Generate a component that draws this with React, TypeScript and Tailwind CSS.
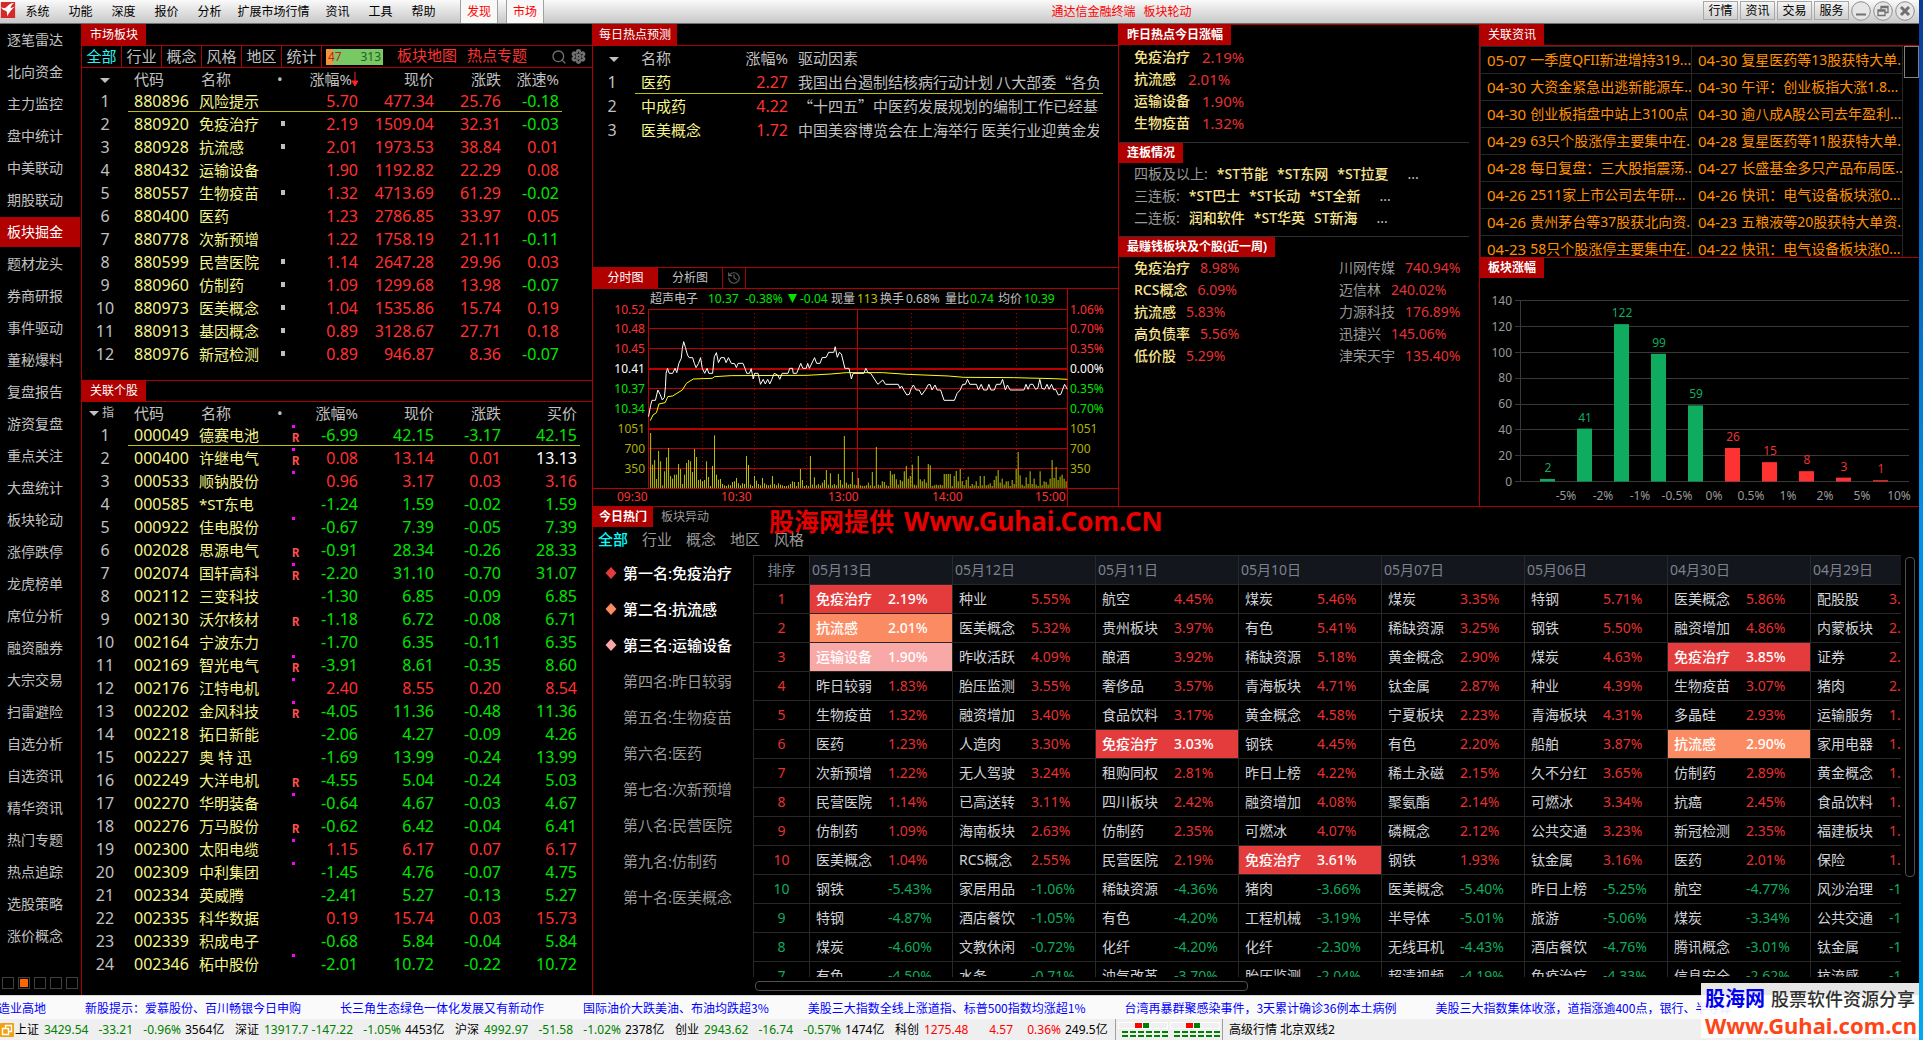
import { Search, Settings, History } from 'lucide-react';
import clsx from 'clsx';

const MENU = ['系统', '功能', '深度', '报价', '分析', '扩展市场行情', '资讯', '工具', '帮助'];

const SIDEBAR = [
  '逐笔雷达', '北向资金', '主力监控', '盘中统计', '中美联动', '期股联动', '板块掘金', '题材龙头', '券商研报', '事件驱动',
  '董秘爆料', '复盘报告', '游资复盘', '重点关注', '大盘统计', '板块轮动', '涨停跌停', '龙虎榜单', '席位分析', '融资融券',
  '大宗交易', '扫雷避险', '自选分析', '自选资讯', '精华资讯', '热门专题', '热点追踪', '选股策略', '涨价概念',
];

interface Sector { code: string; name: string; dot: boolean; values: string[] }

const SECTORS: Sector[] = [
  { code: '880896', name: '风险提示', dot: false, values: ['5.70', '477.34', '25.76', '-0.18'] },
  { code: '880920', name: '免疫治疗', dot: true, values: ['2.19', '1509.04', '32.31', '-0.03'] },
  { code: '880928', name: '抗流感', dot: true, values: ['2.01', '1973.53', '38.84', '0.01'] },
  { code: '880432', name: '运输设备', dot: false, values: ['1.90', '1192.82', '22.29', '0.08'] },
  { code: '880557', name: '生物疫苗', dot: true, values: ['1.32', '4713.69', '61.29', '-0.02'] },
  { code: '880400', name: '医药', dot: false, values: ['1.23', '2786.85', '33.97', '0.05'] },
  { code: '880778', name: '次新预增', dot: false, values: ['1.22', '1758.19', '21.11', '-0.11'] },
  { code: '880599', name: '民营医院', dot: true, values: ['1.14', '2647.28', '29.96', '0.03'] },
  { code: '880960', name: '仿制药', dot: true, values: ['1.09', '1299.68', '13.98', '-0.07'] },
  { code: '880973', name: '医美概念', dot: true, values: ['1.04', '1535.86', '15.74', '0.19'] },
  { code: '880913', name: '基因概念', dot: true, values: ['0.89', '3128.67', '27.71', '0.18'] },
  { code: '880976', name: '新冠检测', dot: true, values: ['0.89', '946.87', '8.36', '-0.07'] },
];

// flags: d = dot above, r = margin-trading mark
interface Stock { code: string; name: string; flags: string; chg: string; price: string; diff: string; bid: string; flat?: boolean }

const STOCKS: Stock[] = [
  { code: '000049', name: '德赛电池', flags: 'dr', chg: '-6.99', price: '42.15', diff: '-3.17', bid: '42.15' },
  { code: '000400', name: '许继电气', flags: 'dr', chg: '0.08', price: '13.14', diff: '0.01', bid: '13.13', flat: true },
  { code: '000533', name: '顺钠股份', flags: 'd', chg: '0.96', price: '3.17', diff: '0.03', bid: '3.16' },
  { code: '000585', name: '*ST东电', flags: '', chg: '-1.24', price: '1.59', diff: '-0.02', bid: '1.59' },
  { code: '000922', name: '佳电股份', flags: 'd', chg: '-0.67', price: '7.39', diff: '-0.05', bid: '7.39' },
  { code: '002028', name: '思源电气', flags: 'r', chg: '-0.91', price: '28.34', diff: '-0.26', bid: '28.33' },
  { code: '002074', name: '国轩高科', flags: 'dr', chg: '-2.20', price: '31.10', diff: '-0.70', bid: '31.07' },
  { code: '002112', name: '三变科技', flags: '', chg: '-1.30', price: '6.85', diff: '-0.09', bid: '6.85' },
  { code: '002130', name: '沃尔核材', flags: 'r', chg: '-1.18', price: '6.72', diff: '-0.08', bid: '6.71' },
  { code: '002164', name: '宁波东力', flags: '', chg: '-1.70', price: '6.35', diff: '-0.11', bid: '6.35' },
  { code: '002169', name: '智光电气', flags: 'dr', chg: '-3.91', price: '8.61', diff: '-0.35', bid: '8.60' },
  { code: '002176', name: '江特电机', flags: 'd', chg: '2.40', price: '8.55', diff: '0.20', bid: '8.54' },
  { code: '002202', name: '金风科技', flags: 'dr', chg: '-4.05', price: '11.36', diff: '-0.48', bid: '11.36' },
  { code: '002218', name: '拓日新能', flags: '', chg: '-2.06', price: '4.27', diff: '-0.09', bid: '4.26' },
  { code: '002227', name: '奥 特 迅', flags: '', chg: '-1.69', price: '13.99', diff: '-0.24', bid: '13.99' },
  { code: '002249', name: '大洋电机', flags: 'r', chg: '-4.55', price: '5.04', diff: '-0.24', bid: '5.03' },
  { code: '002270', name: '华明装备', flags: 'd', chg: '-0.64', price: '4.67', diff: '-0.03', bid: '4.67' },
  { code: '002276', name: '万马股份', flags: 'r', chg: '-0.62', price: '6.42', diff: '-0.04', bid: '6.41' },
  { code: '002300', name: '太阳电缆', flags: 'd', chg: '1.15', price: '6.17', diff: '0.07', bid: '6.17' },
  { code: '002309', name: '中利集团', flags: 'd', chg: '-1.45', price: '4.76', diff: '-0.07', bid: '4.75' },
  { code: '002334', name: '英威腾', flags: '', chg: '-2.41', price: '5.27', diff: '-0.13', bid: '5.27' },
  { code: '002335', name: '科华数据', flags: '', chg: '0.19', price: '15.74', diff: '0.03', bid: '15.73' },
  { code: '002339', name: '积成电子', flags: '', chg: '-0.68', price: '5.84', diff: '-0.04', bid: '5.84' },
  { code: '002346', name: '柘中股份', flags: 'd', chg: '-2.01', price: '10.72', diff: '-0.22', bid: '10.72' },
];

const FORECAST = [
  ['医药', '2.27', '我国出台遏制结核病行动计划 八大部委“各负'],
  ['中成药', '4.22', '“十四五”中医药发展规划的编制工作已经基本'],
  ['医美概念', '1.72', '中国美容博览会在上海举行 医美行业迎黄金发'],
];

const YESTERDAY = [['免疫治疗', '2.19%'], ['抗流感', '2.01%'], ['运输设备', '1.90%'], ['生物疫苗', '1.32%']];

const BOARDS = [
  { label: '四板及以上:', stocks: ['*ST节能', '*ST东网', '*ST拉夏'] },
  { label: '三连板:', stocks: ['*ST巴士', '*ST长动', '*ST全新'] },
  { label: '二连板:', stocks: ['润和软件', '*ST华英', 'ST新海'] },
];

const WEEK = [
  ['免疫治疗', '8.98%', '川网传媒', '740.94%'],
  ['RCS概念', '6.09%', '迈信林', '240.02%'],
  ['抗流感', '5.83%', '力源科技', '176.89%'],
  ['高负债率', '5.56%', '迅捷兴', '145.06%'],
  ['低价股', '5.29%', '津荣天宇', '135.40%'],
];

const NEWS = [
  ['05-07', '一季度QFII新进增持319...', '04-30', '复星医药等13股获特大单...'],
  ['04-30', '大资金紧急出逃新能源车...', '04-30', '午评：创业板指大涨1.8...'],
  ['04-30', '创业板指盘中站上3100点', '04-30', '逾八成A股公司去年盈利...'],
  ['04-29', '63只个股涨停主要集中在...', '04-28', '复星医药等11股获特大单...'],
  ['04-28', '每日复盘：三大股指震荡...', '04-27', '长盛基金多只产品布局医...'],
  ['04-26', '2511家上市公司去年研...', '04-26', '快讯：电气设备板块涨0...'],
  ['04-26', '贵州茅台等37股获北向资...', '04-23', '五粮液等20股获特大单资...'],
  ['04-23', '58只个股涨停主要集中在...', '04-22', '快讯：电气设备板块涨0...'],
];

const BARS = [2, 41, 122, 99, 59, 26, 15, 8, 3, 1];
const BAR_LABELS = ['-5%', '-2%', '-1%', '-0.5%', '0%', '0.5%', '1%', '2%', '5%', '10%'];

const RANKING = ['第一名:免疫治疗', '第二名:抗流感', '第三名:运输设备', '第四名:昨日较弱', '第五名:生物疫苗', '第六名:医药', '第七名:次新预增', '第八名:民营医院', '第九名:仿制药', '第十名:医美概念'];
const DIAMONDS = ['fill-[#e43c3c]', 'fill-[#fb8b63]', 'fill-[#f9a8a8]'];

const RANKS = ['1', '2', '3', '4', '5', '6', '7', '8', '9', '10', '10', '9', '8', '7'];
const DAYS: { date: string; cells: string[] }[] = [
  { date: '05月13日', cells: ['免疫治疗 2.19%', '抗流感 2.01%', '运输设备 1.90%', '昨日较弱 1.83%', '生物疫苗 1.32%', '医药 1.23%', '次新预增 1.22%', '民营医院 1.14%', '仿制药 1.09%', '医美概念 1.04%', '钢铁 -5.43%', '特钢 -4.87%', '煤炭 -4.60%', '有色 -4.50%'] },
  { date: '05月12日', cells: ['种业 5.55%', '医美概念 5.32%', '昨收活跃 4.09%', '胎压监测 3.55%', '融资增加 3.40%', '人造肉 3.30%', '无人驾驶 3.24%', '已高送转 3.11%', '海南板块 2.63%', 'RCS概念 2.55%', '家居用品 -1.06%', '酒店餐饮 -1.05%', '文教休闲 -0.72%', '水务 -0.71%'] },
  { date: '05月11日', cells: ['航空 4.45%', '贵州板块 3.97%', '酿酒 3.92%', '奢侈品 3.57%', '食品饮料 3.17%', '免疫治疗 3.03%', '租购同权 2.81%', '四川板块 2.42%', '仿制药 2.35%', '民营医院 2.19%', '稀缺资源 -4.36%', '有色 -4.20%', '化纤 -4.20%', '油气改革 -3.70%'] },
  { date: '05月10日', cells: ['煤炭 5.46%', '有色 5.41%', '稀缺资源 5.18%', '青海板块 4.71%', '黄金概念 4.58%', '钢铁 4.45%', '昨日上榜 4.22%', '融资增加 4.08%', '可燃冰 4.07%', '免疫治疗 3.61%', '猪肉 -3.66%', '工程机械 -3.19%', '化纤 -2.30%', '胎压监测 -2.04%'] },
  { date: '05月07日', cells: ['煤炭 3.35%', '稀缺资源 3.25%', '黄金概念 2.90%', '钛金属 2.87%', '宁夏板块 2.23%', '有色 2.20%', '稀土永磁 2.15%', '聚氨酯 2.14%', '磷概念 2.12%', '钢铁 1.93%', '医美概念 -5.40%', '半导体 -5.01%', '无线耳机 -4.43%', '超清视频 -4.19%'] },
  { date: '05月06日', cells: ['特钢 5.71%', '钢铁 5.50%', '煤炭 4.63%', '种业 4.39%', '青海板块 4.31%', '船舶 3.87%', '久不分红 3.65%', '可燃冰 3.34%', '公共交通 3.23%', '钛金属 3.16%', '昨日上榜 -5.25%', '旅游 -5.06%', '酒店餐饮 -4.76%', '免疫治疗 -4.33%'] },
  { date: '04月30日', cells: ['医美概念 5.86%', '融资增加 4.86%', '免疫治疗 3.85%', '生物疫苗 3.07%', '多晶硅 2.93%', '抗流感 2.90%', '仿制药 2.89%', '抗癌 2.45%', '新冠检测 2.35%', '医药 2.01%', '航空 -4.77%', '煤炭 -3.34%', '腾讯概念 -3.01%', '信息安全 -2.62%'] },
  { date: '04月29日', cells: ['配股股 3.', '内蒙板块 2.', '证券 2.', '猪肉 2.', '运输服务 1.', '家用电器 1.', '黄金概念 1.', '食品饮料 1.', '福建板块 1.', '保险 1.', '风沙治理 -1', '公共交通 -1', '钛金属 -1', '抗流感 -1'] },
];

const HIGHLIGHT: Record<string, string> = {
  免疫治疗: 'bg-[#e43c3c]',
  抗流感: 'bg-[#fb8b63]',
  运输设备: 'bg-[#f9a8a8]',
};

const TICKER = [
  '新股提示：爱慕股份、百川畅银今日申购',
  '长三角生态绿色一体化发展又有新动作',
  '国际油价大跌美油、布油均跌超3%',
  '美股三大指数全线上涨道指、标普500指数均涨超1%',
  '台湾再暴群聚感染事件，3天累计确诊36例本土病例',
  '美股三大指数集体收涨，道指涨逾400点，银行、半导体',
];

const INDICES = [
  ['上证', '3429.54', '-33.21', '-0.96%', '3564亿'],
  ['深证', '13917.7', '-147.22', '-1.05%', '4453亿'],
  ['沪深', '4992.97', '-51.58', '-1.02%', '2378亿'],
  ['创业', '2943.62', '-16.74', '-0.57%', '1474亿'],
  ['科创', '1275.48', '4.57', '0.36%', '249.5亿'],
];

// intraday lines, drawn in the plot's own units
const PRICE_LINE =
  '170,470 176,436 180,421 190,421 197,390 204,404 210,420 216,412 219,380 221,340 225,325 230,340 240,340 247,325 252,338 258,310 265,295 268,265 272,245 277,262 283,285 288,293 298,293 303,310 308,323 315,310 321,293 326,325 333,340 340,325 345,340 356,340 361,290 367,278 373,308 380,293 390,293 395,308 402,293 410,310 420,311 425,323 430,310 444,310 450,325 455,340 463,340 468,326 474,357 478,340 488,340 495,373 503,358 509,372 516,358 522,372 528,358 535,340 545,345 551,358 558,340 575,340 580,325 588,325 590,340 600,340 612,310 618,325 628,325 632,310 637,325 652,293 658,310 668,310 674,293 686,292 693,277 708,277 712,260 718,292 724,277 730,282 740,325 752,325 759,357 764,340 795,340 801,325 807,338 815,340 836,373 850,360 858,373 895,373 900,385 905,378 912,392 920,405 927,403 933,385 939,375 947,390 956,390 963,405 975,388 982,374 988,374 993,390 1002,375 1008,390 1018,390 1028,421 1058,421 1066,400 1075,390 1082,373 1090,373 1096,358 1103,373 1122,373 1128,390 1136,373 1143,390 1153,390 1158,373 1164,390 1174,390 1180,373 1192,373 1198,358 1206,390 1212,375 1220,390 1260,390 1266,373 1272,388 1278,373 1286,373 1294,388 1300,385 1306,358 1312,385 1320,388 1327,373 1333,388 1340,373 1347,390 1352,388 1360,405 1367,403 1378,373 1386,388';
const AVG_LINE =
  '175,482 183,465 193,458 200,432 218,428 226,410 240,408 268,390 280,370 300,357 355,355 362,350 410,347 630,346 700,342 745,338 850,338 920,343 1040,348 1085,352 1230,353 1345,356 1386,358';
const VOLUMES = [
  165, 70, 84, 27, 111, 80, 8, 50, 92, 120, 36, 28, 40, 40, 72, 57, 12, 40, 75, 84, 80, 48, 117, 93, 24, 26, 20, 24, 80, 33,
  6, 66, 158, 40, 25, 27, 12, 8, 6, 10, 8, 18, 20, 30, 14, 8, 14, 12, 96, 69, 10, 6, 36, 22, 12, 8, 30, 14, 10, 8,
  10, 36, 12, 8, 14, 10, 8, 6, 6, 8, 12, 20, 18, 6, 18, 57, 24, 6, 8, 6, 96, 10, 32, 8, 12, 8, 16, 24, 54, 10,
  44, 8, 12, 8, 42, 24, 10, 156, 16, 10, 12, 48, 10, 8, 30, 8, 6, 6, 8, 16, 8, 48, 6, 123, 10, 8, 20, 18, 8, 6,
  51, 40, 42, 26, 10, 24, 20, 50, 66, 28, 36, 70, 10, 8, 96, 26, 20, 26, 16, 72, 68, 6, 8, 10, 8, 10, 8, 42, 42, 42,
  42, 6, 36, 51, 20, 57, 20, 8, 24, 34, 6, 12, 8, 20, 6, 36, 8, 36, 8, 10, 14, 6, 24, 36, 54, 16, 28, 10, 20, 20,
  6, 24, 12, 57, 108, 38, 10, 6, 32, 12, 50, 12, 28, 10, 6, 50, 8, 20, 18, 10, 28, 84, 30, 63, 24, 34, 40, 28, 20,
];

const tone = (v: string) => (v.startsWith('-') ? 'text-[#00e600]' : 'text-[#ff3232]');
const underline = (on: boolean) => on && 'shadow-[inset_0_-1px_0_#c0c000]';

function PanelTab({ children, bold = false, className = 'h-5' }: { children: React.ReactNode; bold?: boolean; className?: string }) {
  return (
    <h2 className={clsx('flex w-fit items-center bg-[#b00000] px-2 text-xs text-white', bold ? 'font-bold' : 'font-normal', className)}>
      {children}
    </h2>
  );
}

function Triangle() {
  return <span className="inline-block border-x-[5px] border-t-[5px] border-x-transparent border-t-[#c0c0c0] align-middle" />;
}

function MenuBar() {
  return (
    <header className="flex h-6 shrink-0 items-stretch border-b border-[#707070] bg-linear-to-b from-[#fafafa] to-[#c8c8c8] text-xs text-black">
      <svg viewBox="0 0 16 18" className="mt-[2px] h-4 w-4 shrink-0">
        <rect width="16" height="18" fill="#d42a2a" />
        <path d="M0 6c3 1 5 1 7-1 2-2 4-4 8-4-3 2-4 4-4 6l5-2c-4 3-6 6-9 11 0-3 0-5-1-6-2 0-4-1-6-4z" fill="#fff" />
      </svg>
      <nav className="flex">
        {MENU.map((m) => (
          <button key={m} className={m.length > 2 ? 'w-[85px]' : 'w-[43px]'}>{m}</button>
        ))}
      </nav>
      <button className="ml-[15px] w-[38px] border-x border-[#a0a0a0] bg-[#f8f8f8] text-[#ff0000]">发现</button>
      <button className="ml-2 w-[38px] border-x border-[#a0a0a0] bg-[#f8f8f8] text-[#ff0000]">市场</button>
      <p className="flex flex-1 items-center justify-center gap-2 pr-1 text-[#ff0000]">
        <span>通达信金融终端</span>
        <span>板块轮动</span>
      </p>
      <div className="flex items-center gap-[2px] pr-1 pb-[2px]">
        {['行情', '资讯', '交易', '服务'].map((b) => (
          <button key={b} className="h-[19px] w-[35px] border border-[#a8a8a8] bg-linear-to-b from-[#f4f4f4] to-[#cfcfcf] leading-4">{b}</button>
        ))}
        {['min', 'restore', 'close'].map((k) => (
          <button key={k} aria-label={k} className="h-5 w-5">
            <svg viewBox="0 0 20 20" className="h-5 w-5" fill="none" stroke="#707070">
              <circle cx="10" cy="10" r="9.3" fill="#e6e6e6" stroke="#8c8c8c" />
              {k === 'min' && <path d="M5 13.5h10" strokeWidth="2" />}
              {k === 'restore' && <path d="M8 8.500V5.500h7v6h-3M5 9h7v5.500H5zM5 10h7M8 6.500h7" strokeWidth="1.300" />}
              {k === 'close' && <path d="M6 6l8 8M14 6l-8 8" strokeWidth="3" />}
            </svg>
          </button>
        ))}
      </div>
    </header>
  );
}

function Sidebar() {
  return (
    <aside className="flex w-[81px] shrink-0 flex-col">
      <nav className="flex flex-col">
        {SIDEBAR.map((s) => (
          <button
            key={s}
            className={clsx(
              'my-px mr-px h-[30px] pl-[7px] text-left text-sm',
              s === '板块掘金' ? 'bg-[#b00000] text-white' : 'text-[#c0c0c0]',
            )}
          >
            {s}
          </button>
        ))}
      </nav>
      <div className="mt-auto flex gap-1 pb-[6px] pl-[2px]">
        {[0, 1, 2, 3, 4].map((i) => (
          <span key={i} className="flex h-3 w-3 items-center justify-center border border-[#404040]">
            {i === 1 && <span className="h-2 w-2 bg-[#ff6600]" />}
          </span>
        ))}
      </div>
    </aside>
  );
}

function SectorPanel() {
  return (
    <section className="h-[356px] shrink-0">
      <PanelTab className="h-[21px]">市场板块</PanelTab>
      <div className="flex h-[23px] items-center border-y border-[#b00000] text-[15px]">
        {['全部', '行业', '概念', '风格', '地区', '统计'].map((t, i) => (
          <button key={t} className={clsx('h-full w-10 border-r border-[#b00000] pb-[2px] leading-[18px]', i === 0 ? 'text-[#30f0f0]' : 'text-[#c0c0c0]')}>{t}</button>
        ))}
        <div className="ml-1 flex h-4 w-[57px] items-center justify-between bg-linear-to-r from-[#f0943c] from-12% to-[#78c864] to-12% px-[2px] text-xs text-[#206020]">
          <span className="text-[#c02020]">47</span>
          <span>313</span>
        </div>
        <button className="ml-[14px] pb-[2px] text-[#ff3232]">板块地图</button>
        <button className="ml-[10px] pb-[2px] text-[#ff3232]">热点专题</button>
        <button aria-label="搜索" className="ml-auto text-[#707070]"><Search className="h-4 w-4" strokeWidth={2} /></button>
        <button aria-label="设置" className="mr-[6px] ml-1 text-[#707070]"><Settings className="h-[15px] w-[15px]" strokeWidth={4} /></button>
      </div>
      <table className="table-fixed border-separate border-spacing-0 text-base text-[#c0c0c0]">
        <colgroup>
          <col className="w-[46px]" /><col className="w-[71px]" /><col className="w-[78px]" /><col className="w-[31px]" />
          <col className="w-[50px]" /><col className="w-[76px]" /><col className="w-[67px]" /><col className="w-[61px]" />
        </colgroup>
        <thead>
          <tr className="h-[21px] text-[15px] leading-[18px]">
            <th className="p-0 font-normal"><Triangle /></th>
            <th className="p-0 pl-[6px] text-left font-normal">代码</th>
            <th className="p-0 pl-[2px] text-left font-normal">名称</th>
            <th className="p-0 text-left font-normal">•</th>
            <th className="p-0 text-right font-normal whitespace-nowrap">
              <span className="flex items-center justify-end">
                涨幅%
                <svg viewBox="0 0 6 14" className="h-[14px] w-[6px]"><path d="M3 0v14M0 9l3 5 3-5z" stroke="#ff2020" fill="#ff2020" strokeWidth="1" /></svg>
              </span>
            </th>
            <th className="p-0 text-right font-normal">现价</th>
            <th className="p-0 text-right font-normal">涨跌</th>
            <th className="p-0 pr-[3px] text-right font-normal">涨速%</th>
          </tr>
        </thead>
        <tbody>
          {SECTORS.map((s, i) => (
            <tr key={s.code} className="h-[23px] leading-[22px]">
              <td className="p-0 text-center">{i + 1}</td>
              <td className={clsx('p-0 pl-[6px] text-[#f5f58c]', underline(i === 0))}>{s.code}</td>
              <td className={clsx('p-0 text-[15px] text-[#f5f58c]', underline(i === 0))}>{s.name}</td>
              <td className={clsx('p-0 pl-1', underline(i === 0))}>{s.dot && <span className="block h-[5px] w-1 bg-[#c0c0c0]" />}</td>
              {s.values.map((v, k) => (
                <td key={k} className={clsx('p-0 text-right', tone(v), k === 3 && 'pr-[3px]', underline(i === 0))}>{v}</td>
              ))}
            </tr>
          ))}
        </tbody>
      </table>
    </section>
  );
}

function StockPanel() {
  return (
    <section className="border-t border-[#b00000]">
      <PanelTab>关联个股</PanelTab>
      <table className="w-full table-fixed border-separate border-spacing-0 border-t border-[#b00000] text-base text-[#c0c0c0]">
        <colgroup>
          <col className="w-[46px]" /><col className="w-[71px]" /><col className="w-[78px]" /><col className="w-[31px]" />
          <col className="w-[50px]" /><col className="w-[76px]" /><col className="w-[67px]" /><col className="w-[79px]" /><col />
        </colgroup>
        <thead>
          <tr className="h-[21px] text-[15px] leading-[18px]">
            <th className="p-0 pl-[7px] text-left text-xs font-normal whitespace-nowrap"><Triangle /> 指</th>
            <th className="p-0 pl-[6px] text-left font-normal">代码</th>
            <th className="p-0 pl-[2px] text-left font-normal">名称</th>
            <th className="p-0 text-left font-normal">•</th>
            <th className="p-0 text-right font-normal whitespace-nowrap">涨幅%</th>
            <th className="p-0 text-right font-normal">现价</th>
            <th className="p-0 text-right font-normal">涨跌</th>
            <th className="p-0 pr-[3px] text-right font-normal">买价</th>
          </tr>
        </thead>
        <tbody>
          {STOCKS.map((s, i) => (
            <tr key={s.code} className="h-[23px] leading-[22px]">
              <td className="p-0 text-center">{i + 1}</td>
              <td className={clsx('p-0 pl-[6px] text-[#f5f58c]', underline(i === 0))}>{s.code}</td>
              <td className={clsx('p-0 text-[15px] text-[#f5f58c]', underline(i === 0))}>{s.name}</td>
              <td className={clsx('p-0 pl-[15px]', underline(i === 0))}>
                <span className="flex h-5 flex-col justify-between">
                  <span className={clsx('h-[3px] w-[3px]', s.flags.includes('d') && 'bg-[#ff00ff]')} />
                  {s.flags.includes('r') && <span className="font-['Liberation_Mono',monospace] text-xs leading-3 font-bold text-[#ff5050]">R</span>}
                </span>
              </td>
              <td className={clsx('p-0 text-right', tone(s.chg), underline(i === 0))}>{s.chg}</td>
              <td className={clsx('p-0 text-right', tone(s.chg), underline(i === 0))}>{s.price}</td>
              <td className={clsx('p-0 text-right', tone(s.diff), underline(i === 0))}>{s.diff}</td>
              <td className={clsx('p-0 pr-[3px] text-right', s.flat ? 'text-white' : tone(s.chg), underline(i === 0))}>{s.bid}</td>
            </tr>
          ))}
        </tbody>
      </table>
    </section>
  );
}

function ForecastPanel() {
  return (
    <section className="h-[243px]">
      <PanelTab className="h-[21px] px-[6px]">每日热点预测</PanelTab>
      <div className="border-t border-[#b00000] pr-[15px]">
        <table className="w-full table-fixed border-separate border-spacing-0 text-[15px] text-[#c0c0c0]">
          <colgroup>
            <col className="w-[42px]" /><col className="w-[93px]" /><col className="w-[60px]" /><col />
          </colgroup>
          <thead>
            <tr className="h-6 leading-5">
              <th className="p-0 font-normal"><Triangle /></th>
              <th className="p-0 pl-[6px] text-left font-normal">名称</th>
              <th className="p-0 text-right font-normal">涨幅%</th>
              <th className="p-0 pl-[10px] text-left font-normal">驱动因素</th>
            </tr>
          </thead>
          <tbody>
            {FORECAST.map(([name, pct, why], i) => (
              <tr key={name} className="h-[23px] leading-[22px]">
                <td className="p-0 pr-1 text-center text-base">{i + 1}</td>
                <td className={clsx('p-0 pl-[6px] text-[#f5f58c]', underline(i === 0))}>{name}</td>
                <td className={clsx('p-0 text-right text-base text-[#ff3232]', underline(i === 0))}>{pct}</td>
                <td className={clsx('p-0 pr-1 pl-[10px]', underline(i === 0))}>
                  <div className="overflow-hidden font-['Noto_Sans_CJK_SC',sans-serif] whitespace-nowrap">{why}</div>
                </td>
              </tr>
            ))}
          </tbody>
        </table>
      </div>
    </section>
  );
}

function IntradayPanel() {
  const left = [['10.52', 21], ['10.48', 40], ['10.45', 60], ['10.41', 80], ['10.37', 100], ['10.34', 120]] as const;
  const right = ['1.06%', '0.70%', '0.35%', '0.00%', '0.35%', '0.70%'];
  const color = (i: number) => (i < 3 ? '#ff3232' : i === 3 ? '#ffffff' : '#00e600');
  return (
    <section className="border-t border-[#b00000]">
      <div className="flex h-[21px] border-b border-[#b00000] text-xs">
        <button className="w-[65px] bg-[#b00000] text-white">分时图</button>
        <button className="w-[65px] border-r border-[#b00000] text-[#c0c0c0]">分析图</button>
        <button aria-label="历史" className="flex w-[23px] items-center justify-center border-r border-[#b00000] text-[#606060]">
          <History className="h-[14px] w-[14px]" strokeWidth={2} />
        </button>
      </div>
      <svg viewBox="0 0 525 217" className="block w-full text-xs" fill="none">
        <g stroke="#c00000" shapeRendering="crispEdges">
          {[20.5, 39.5, 59.5, 99.5, 119.5, 159.5, 179.5].map((y) => <path key={y} d={`M56 ${y}H474`} />)}
          <path d="M56 80H474M56 140H474" strokeWidth="2" />
          <path d="M0 199.500H525M55.500 20V199M264.500 20V199M474.500 0V217" />
          <path d="M109.500 20V199M161.500 20V199M213.500 20V199M318.500 20V199M370.500 20V199M423.500 20V199" strokeDasharray="1 3" />
        </g>
        <g transform="translate(-3 -29) scale(0.3444 0.3333)" shapeRendering="crispEdges">
          {VOLUMES.map((v, i) => <path key={i} d={`M${176 + i * 5.8} 684v${-v}`} stroke="#c0c000" vectorEffect="non-scaling-stroke" />)}
          <polyline points={AVG_LINE} stroke="#ffff00" vectorEffect="non-scaling-stroke" />
          <polyline points={PRICE_LINE} stroke="#ffffff" vectorEffect="non-scaling-stroke" />
        </g>
        <g textAnchor="end">
          {left.map(([t, y], i) => <text key={t} x="52" y={y + 4} fill={color(i)}>{t}</text>)}
          {['1051', '700', '350'].map((t, i) => <text key={t} x="52" y={144 + i * 20} fill="#b0b000">{t}</text>)}
        </g>
        {left.map(([t, y], i) => <text key={t} x="477" y={y + 4} fill={color(i)}>{right[i]}</text>)}
        {['1051', '700', '350'].map((t, i) => <text key={t} x="477" y={144 + i * 20} fill="#b0b000">{t}</text>)}
        {['09:30', '10:30', '13:00', '14:00', '15:00'].map((t, i) => (
          <text key={t} x={[24, 128, 235, 339, 442][i]} y="212" fill="#ff3232">{t}</text>
        ))}
        <g fill="#c0c0c0">
          <text x="57" y="14">超声电子</text>
          <text x="238" y="14">现量</text>
          <text x="287" y="14">换手</text>
          <text x="313" y="14">0.68%</text>
          <text x="352" y="14">量比</text>
          <text x="405" y="14">均价</text>
        </g>
        <text x="264" y="14" fill="#c0c000">113</text>
        <g fill="#00e600">
          <text x="115" y="14">10.37</text>
          <text x="152" y="14">-0.38%</text>
          <path d="M195 5h9l-4.500 9z" />
          <text x="207" y="14">-0.04</text>
          <text x="377" y="14">0.74</text>
          <text x="431" y="14">10.39</text>
        </g>
      </svg>
    </section>
  );
}

function HotColumn() {
  return (
    <div className="border-t border-l border-[#b00000] pr-[10px] text-sm leading-[22px] whitespace-nowrap">
      <section className="h-[117px]">
        <PanelTab bold>昨日热点今日涨幅</PanelTab>
        <ul className="pt-[1px] pl-[15px]">
          {YESTERDAY.map(([n, p]) => (
            <li key={n} className="flex gap-3">
              <span className="font-medium text-[#f9e58f]">{n}</span>
              <span className="text-[15px] text-[#e43232]">{p}</span>
            </li>
          ))}
        </ul>
      </section>
      <section className="h-[94px] border-t border-[#303030]">
        <PanelTab bold>连板情况</PanelTab>
        <ul className="pl-[15px]">
          {BOARDS.map((b) => (
            <li key={b.label} className="flex gap-[9px]">
              <span className="text-[#999999]">{b.label}</span>
              {b.stocks.map((s) => <span key={s} className="font-medium text-[#f9e58f]">{s}</span>)}
              <span className="ml-[10px] text-[#c0c0c0]">...</span>
            </li>
          ))}
        </ul>
      </section>
      <section className="border-t border-[#303030]">
        <PanelTab bold>最赚钱板块及个股(近一周)</PanelTab>
        <ul className="pl-[15px]">
          {WEEK.map(([a, p, b, q]) => (
            <li key={a} className="grid grid-cols-[205px_1fr]">
              <span className="flex gap-[10px]">
                <span className="font-medium text-[#f9e58f]">{a}</span>
                <span className="text-[#e43232]">{p}</span>
              </span>
              <span className="flex gap-[10px]">
                <span className="text-[#999999]">{b}</span>
                <span className="text-[#e43232]">{q}</span>
              </span>
            </li>
          ))}
        </ul>
      </section>
    </div>
  );
}

function NewsPanel() {
  return (
    <section className="h-[233px] overflow-hidden">
      <PanelTab className="h-[21px]">关联资讯</PanelTab>
      <div className="flex items-start gap-px border-t border-[#b00000]">
        <table className="flex-1 table-fixed border-collapse text-sm text-[#ff9000]">
          <tbody>
            {NEWS.map((n, i) => (
              <tr key={i} className="h-[27px]">
                {[0, 2].map((k) => (
                  <td key={k} className="w-1/2 border border-[#282828] p-0 pl-[6px]">
                    <a href="#news" className="flex gap-1 overflow-hidden leading-[26px] whitespace-nowrap">
                      <span className="text-[15px]">{n[k]}</span>
                      <span className="w-0 flex-1 overflow-hidden">{n[k + 1]}</span>
                    </a>
                  </td>
                ))}
              </tr>
            ))}
          </tbody>
        </table>
        <div className="h-8 w-[15px] border border-[#808080]" />
      </div>
    </section>
  );
}

function DistributionPanel() {
  const y = (v: number) => 223.5 - v * 1.29;
  return (
    <section className="border-t border-[#b00000]">
      <PanelTab bold>板块涨幅</PanelTab>
      <svg viewBox="0 20 439 228" className="block w-full text-xs" fill="none">
        <g stroke="#383838" shapeRendering="crispEdges">
          {[0, 20, 40, 60, 80, 100, 120, 140].map((v) => <path key={v} d={`M35 ${y(v)}H429`} />)}
          <path d="M40.500 43V223" />
        </g>
        {[0, 20, 40, 60, 80, 100, 120, 140].map((v) => <text key={v} x="32" y={y(v) + 4} textAnchor="end" fill="#999999">{v}</text>)}
        {BARS.map((v, i) => (
          <g key={i} textAnchor="middle">
            <rect x={60 + i * 37} y={y(v)} width="15" height={v * 1.29} fill={i < 5 ? '#0fab5e' : '#ff3232'} />
            <text x={68 + i * 37} y={y(v) - 7} fill={i < 5 ? '#0fab5e' : '#e43232'}>{v}</text>
            <text x={86 + i * 37} y="242" fill="#999999">{BAR_LABELS[i]}</text>
          </g>
        ))}
      </svg>
    </section>
  );
}

function RotationPanel() {
  return (
    <section className="relative flex min-h-0 flex-1 flex-col border-t border-[#b00000]">
      <div className="flex h-5 shrink-0 text-xs">
        <button className="w-[60px] bg-[#b00000] font-bold text-white">今日热门</button>
        <button className="px-2 text-[#999999]">板块异动</button>
      </div>
      <div className="flex h-7 shrink-0 items-center gap-[14px] pb-[3px] pl-[5px] text-[15px] text-[#999999]">
        {['全部', '行业', '概念', '地区', '风格'].map((t, i) => (
          <button key={t} className={clsx(i === 0 && 'font-medium text-[#00ffff]')}>{t}</button>
        ))}
      </div>
      <p className="absolute top-0 left-[176px] flex items-center gap-[10px] text-[26px] leading-7 font-bold whitespace-nowrap text-[#e60000]">
        <span className="text-[25px]">股海网提供</span>
        <span>Www.Guhai.Com.CN</span>
      </p>
      <div className="flex min-h-0 flex-1">
        <ol className="w-40 shrink-0 text-[15px] whitespace-nowrap">
          {RANKING.map((r, i) => (
            <li key={r} className={clsx('flex h-9 items-center pl-3', i < 3 ? 'font-medium text-white' : 'text-[#999999]')}>
              <svg viewBox="0 0 12 12" className="mr-[6px] h-3 w-3">{i < 3 && <path d="M6 0l5.500 6L6 12 .5 6z" className={DIAMONDS[i]} />}</svg>
              {r}
            </li>
          ))}
        </ol>
        <div className="flex min-w-0 flex-1 flex-col">
          <div className="min-h-0 flex-1 overflow-hidden">
            <table className="w-[1201px] table-fixed border-collapse text-sm">
              <colgroup>
                <col className="w-14" />
                {DAYS.map((d) => <col key={d.date} className="w-[143px]" />)}
              </colgroup>
              <thead>
                <tr className="h-[29px] text-[#7c828e]">
                  <th className="border border-[#282828] font-normal">排序</th>
                  {DAYS.map((d) => <th key={d.date} className="border border-[#282828] bg-[#14161e] pl-[2px] text-left font-normal">{d.date}</th>)}
                </tr>
              </thead>
              <tbody>
                {RANKS.map((rank, r) => (
                  <tr key={r} className="h-[29px] leading-7">
                    <td className={clsx('border border-[#282828] p-0 text-center', r < 10 ? 'text-[#e43232]' : 'text-[#0fab5e]')}>{rank}</td>
                    {DAYS.map((d) => {
                      const [name, pct] = d.cells[r].split(' ');
                      const bg = r < 10 ? HIGHLIGHT[name] : undefined;
                      return (
                        <td key={d.date} className={clsx('border border-[#282828] p-0 pl-[6px]', bg)}>
                          <div className={clsx('flex', bg && 'font-medium text-white')}>
                            <span className={clsx('w-[72px]', !bg && 'text-[#d0d3d8]')}>{name}</span>
                            <span className={clsx(!bg && (r < 10 ? 'text-[#e43232]' : 'text-[#0fab5e]'))}>{pct}</span>
                          </div>
                        </td>
                      );
                    })}
                  </tr>
                ))}
              </tbody>
            </table>
          </div>
          <div className="flex h-[18px] shrink-0 pt-1 pl-[2px]">
            <div className="h-[10px] w-[43%] rounded border border-[#505050]" />
          </div>
        </div>
        <div className="w-[18px] shrink-0 pt-[2px] pl-1">
          <div className="h-[320px] w-[10px] rounded border border-[#505050]" />
        </div>
      </div>
    </section>
  );
}

function Signal({ at }: { at: number }) {
  return (
    <svg viewBox="0 0 50 16" className="h-4 w-[50px]" shapeRendering="crispEdges">
      <rect x="0.5" y="0.5" width="49" height="6" fill="#f0f0f0" stroke="#ffffff" />
      <rect x={at} y="1" width="7" height="5" fill="#ff0000" />
      <rect x={at + 8} y="1" width="6" height="5" fill="#008000" />
      {[0, 1, 2, 3, 4, 5].map((i) => (
        <path key={i} d={`M${4 + i * 8} 10h6M${4 + i * 8} 13.500h6`} stroke="#008000" strokeWidth="2" />
      ))}
    </svg>
  );
}

function Footer() {
  return (
    <footer className="relative shrink-0 text-xs whitespace-nowrap">
      <div className="flex h-6 items-center gap-[39px] overflow-hidden border-t border-[#d8d8d8] bg-[#fafafa] font-['Liberation_Sans_Narrow','Noto_Sans_CJK_SC',sans-serif] text-[#0000ff]">
        <a href="#ticker" className="flex w-[46px] shrink-0 justify-end">造业高地</a>
        {TICKER.map((t) => <a key={t} href="#ticker" className="shrink-0">{t}</a>)}
      </div>
      <div className="flex h-[21px] items-center bg-[#efefef] text-black">
        <svg viewBox="0 0 14 14" className="mr-px h-[14px] w-[14px]">
          <rect width="14" height="14" rx="1" fill="#f0a010" />
          <path d="M2.500 5.500h6v6h-6zM5.500 5V2.500h6v6H9" fill="none" stroke="#fff" strokeWidth="1.400" />
        </svg>
        {INDICES.map(([n, price, chg, pct, amount]) => {
          const c = chg.startsWith('-') ? 'text-[#008000]' : 'text-[#ff0000]';
          return (
            <div key={n} className="grid grid-cols-[29px_45px_44px_48px_54px]">
              <span>{n}</span>
              <span className={c}>{price}</span>
              <span className={clsx('text-right', c)}>{chg}</span>
              <span className={clsx('text-right', c)}>{pct}</span>
              <span className="pl-1">{amount}</span>
            </div>
          );
        })}
        <div className="flex h-full items-center gap-[2px] border-x border-[#a0a0a0] px-[2px]">
          <Signal at={17} />
          <Signal at={16} />
        </div>
        <span className="ml-[6px]">高级行情 北京双线2</span>
      </div>
      <div className="absolute right-0 bottom-[2px] flex h-[55px] w-[218px] flex-col justify-center bg-white/90 px-1 font-bold">
        <div className="flex items-center justify-between leading-7">
          <span className="text-xl text-[#0000ee]">股海网</span>
          <span className="text-lg font-medium text-[#303030]">股票软件资源分享</span>
        </div>
        <span className="text-[22px] leading-6 text-[#ff4418]">Www.Guhai.com.cn</span>
      </div>
    </footer>
  );
}

export default function App() {
  return (
    <div className="flex h-screen bg-black font-['Noto_Sans','Noto_Sans_CJK_SC',sans-serif]">
      <div className="flex min-w-0 flex-1 flex-col">
        <MenuBar />
        <main className="flex min-h-0 flex-1 overflow-hidden">
          <Sidebar />
          <div className="w-[511px] shrink-0 border-l border-[#b00000]">
            <SectorPanel />
            <StockPanel />
          </div>
          <div className="flex min-w-0 flex-1 flex-col border-l border-[#b00000]">
            <div className="grid grid-cols-[minmax(0,525fr)_minmax(0,361fr)_minmax(0,440fr)]">
              <div>
                <ForecastPanel />
                <IntradayPanel />
              </div>
              <HotColumn />
              <div className="border-l border-[#b00000]">
                <NewsPanel />
                <DistributionPanel />
              </div>
            </div>
            <RotationPanel />
          </div>
        </main>
        <Footer />
      </div>
      <div className="w-1 shrink-0 bg-linear-to-b from-[#0a3c96] via-[#0090e8] via-50% to-[#00a8f0]" />
    </div>
  );
}
